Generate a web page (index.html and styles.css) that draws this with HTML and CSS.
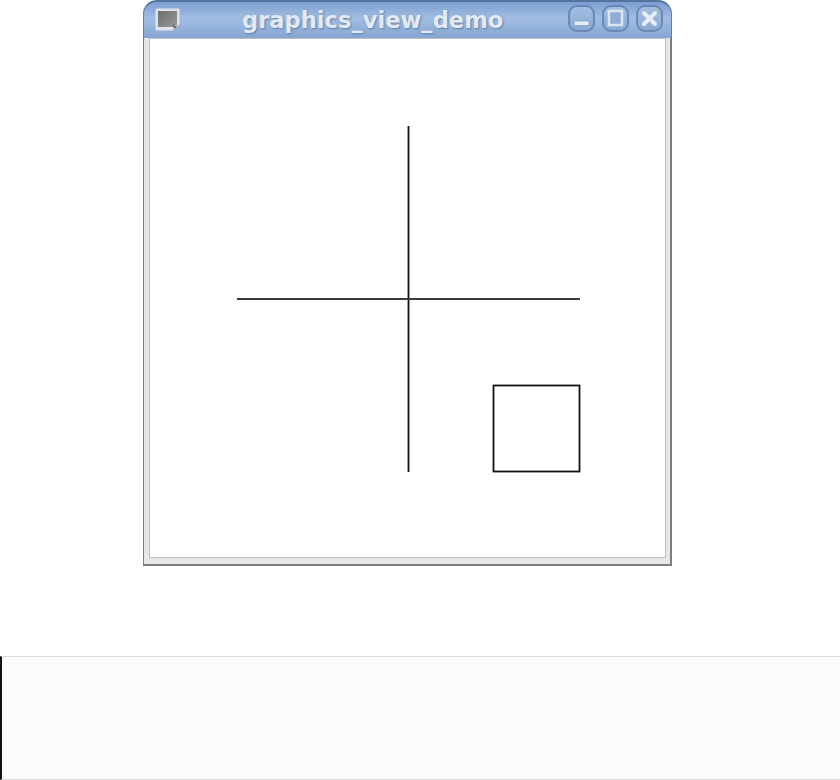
FILE: index.html
```html
<!DOCTYPE html>
<html lang="en">
<head>
    <meta charset="UTF-8">
    <title>graphics_view_demo</title>
    <link rel="stylesheet" href="styles.css">
</head>
<body>
    <div class="window">
        <div class="titlebar">
            <svg class="app-icon" width="25" height="23" viewBox="0 0 25 23">
                <path d="M0.500 2 Q0.500 0.500 2 0.500 H23.500 Q24.500 0.500 24.500 1.500 V16 L18 22.500 H2 Q0.500 22.500 0.500 21 Z" fill="#dce3ea"/>
                <rect x="3" y="3" width="19" height="16" fill="url(#iconfill)"/>
                <path d="M18 22.500 V17 H24.500 Z" fill="#b4bbc0"/>
                <path d="M18 17 L21 20" stroke="#55595c" stroke-width="1.500"/>
                <defs>
                    <linearGradient id="iconfill" x1="0" y1="0" x2="1" y2="1">
                        <stop offset="0" stop-color="#6f6f6d"/>
                        <stop offset="1" stop-color="#989896"/>
                    </linearGradient>
                </defs>
            </svg>
            <span class="title">graphics_view_demo</span>
            <div class="buttons">
                <div class="btn">
                    <svg width="23" height="23" viewBox="0 0 23 23"><rect x="4" y="14" width="15" height="4.500" rx="1" fill="#e6edf6" stroke="#6f8fbb" stroke-width="0.600"/></svg>
                </div>
                <div class="btn">
                    <svg width="23" height="23" viewBox="0 0 23 23"><rect x="5" y="4" width="13" height="14" fill="#8fadd4" stroke="#dbe5f1" stroke-width="2.500"/></svg>
                </div>
                <div class="btn">
                    <svg width="23" height="23" viewBox="0 0 23 23"><path d="M6 6 L17 17 M17 6 L6 17" stroke="#e6edf6" stroke-width="4" stroke-linecap="round"/></svg>
                </div>
            </div>
        </div>
        <div class="frame">
            <div class="frame-inner">
                <svg class="canvas" width="515" height="518" viewBox="150 39 515 518">
                    <path d="M408.500 126 V472" stroke="#111" stroke-width="1.800" fill="none"/>
                    <path d="M237 299 H580" stroke="#3a3a3a" stroke-width="2" fill="none"/>
                    <rect x="493.500" y="385.500" width="86" height="86" stroke="#111" stroke-width="1.800" fill="none"/>
                </svg>
            </div>
        </div>
    </div>
    <div class="code-block"></div>
</body>
</html>
```

FILE: styles.css
```css
html, body {
    margin: 0;
    padding: 0;
    background-color: #fff;
}
body {
    width: 840px;
    height: 780px;
    overflow: hidden;
    display: flex;
    flex-direction: column;
}
.window {
    width: 529px;
    height: 566px;
    margin-left: 143px;
    display: flex;
    flex-direction: column;
    flex-shrink: 0;
}
.titlebar {
    height: 38px;
    flex-shrink: 0;
    box-sizing: border-box;
    display: flex;
    align-items: center;
    position: relative;
    padding: 0 8px 0 11px;
    background: linear-gradient(#7b9fd0, #a2bde1 45%, #84a6d3);
    border: 1px solid #5c7ba6;
    border-bottom: none;
    border-top: 2px solid #54749f;
    border-radius: 14px 14px 0 0;
}
.app-icon {
    display: block;
    margin-bottom: 2px;
}
.title {
    position: absolute;
    left: 98px;
    top: 4px;
    font-family: "DejaVu Sans", sans-serif;
    font-size: 22.6px;
    font-weight: bold;
    line-height: 28px;
    color: #e2e9f3;
    text-shadow: 1px 1px 2px #5f7fa9;
    white-space: nowrap;
}
.buttons {
    margin-left: auto;
    margin-bottom: 3px;
    display: flex;
    gap: 7px;
}
.btn {
    width: 23px;
    height: 23px;
    border: 2px solid #6888b7;
    border-radius: 9px;
    background: linear-gradient(#a3bddf, #8aa9d3);
    display: flex;
}
.frame {
    flex: 1;
    display: flex;
    min-height: 0;
    border-style: solid;
    border-color: #7d7d7d;
    border-width: 0 2px 2px 1px;
}
.frame-inner {
    flex: 1;
    display: flex;
    background-color: #e6e6e4;
    padding: 0 4px 6px 5px;
}
.canvas {
    display: block;
    background-color: #fff;
    box-shadow: 0 0 0 1px #bdbdbb;
    margin: 1px;
}
.code-block {
    height: 124px;
    margin-top: 90px;
    box-sizing: border-box;
    background-color: #fbfbfb;
    border-top: 1px solid #dcdcdc;
    border-bottom: 1px solid #dcdcdc;
    border-left: 2px solid #111;
}
```
